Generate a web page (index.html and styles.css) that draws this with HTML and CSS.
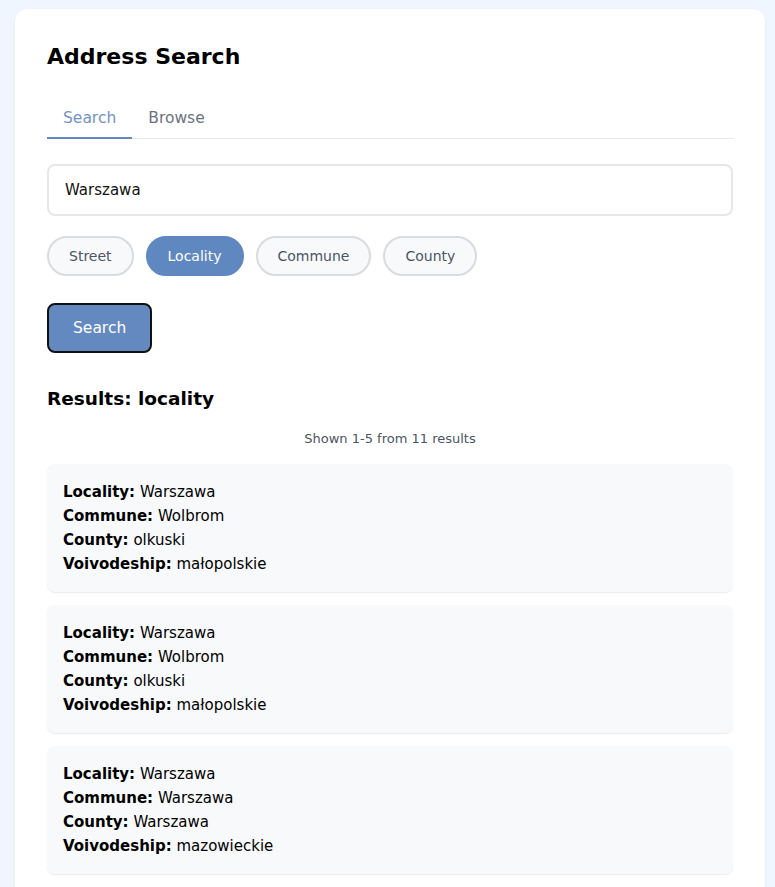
FILE: index.html
```html
<!DOCTYPE html>
<html lang="en">
<head>
<meta charset="utf-8">
<title>Address Search</title>
<link rel="stylesheet" href="styles.css">
</head>
<body>
<main class="card">
  <h1 class="title">Address Search</h1>
  <nav class="tabs">
    <button class="tab tab-active">Search</button>
    <button class="tab">Browse</button>
  </nav>
  <input class="search-input" type="text" value="Warszawa">
  <div class="chips">
    <button class="chip">Street</button>
    <button class="chip chip-active">Locality</button>
    <button class="chip">Commune</button>
    <button class="chip">County</button>
  </div>
  <button class="search-btn">Search</button>
  <h2 class="results-title">Results: locality</h2>
  <p class="results-count">Shown 1-5 from 11 results</p>
  <div class="results">
    <div class="result">
      <div><b>Locality:</b> Warszawa</div>
      <div><b>Commune:</b> Wolbrom</div>
      <div><b>County:</b> olkuski</div>
      <div><b>Voivodeship:</b> małopolskie</div>
    </div>
    <div class="result">
      <div><b>Locality:</b> Warszawa</div>
      <div><b>Commune:</b> Wolbrom</div>
      <div><b>County:</b> olkuski</div>
      <div><b>Voivodeship:</b> małopolskie</div>
    </div>
    <div class="result">
      <div><b>Locality:</b> Warszawa</div>
      <div><b>Commune:</b> Warszawa</div>
      <div><b>County:</b> Warszawa</div>
      <div><b>Voivodeship:</b> mazowieckie</div>
    </div>
  </div>
</main>
</body>
</html>
```
FILE: styles.css
```css
* { box-sizing: border-box; }
html, body { margin: 0; padding: 0; }
body {
  background: #eff6ff;
  font-family: "DejaVu Sans", "Open Sans", sans-serif;
  color: #000;
  padding: 9px 10px 0 15px;
  overflow: hidden;
  height: 887px;
}
.card {
  background: #fff;
  border-radius: 12px;
  padding: 32px;
  width: 750px;
  min-height: 900px;
  box-shadow: 0 1px 3px rgba(0,0,0,0.06);
}
.title {
  margin: 0 0 25px;
  font-size: 22px;
  line-height: 32px;
  font-weight: bold;
}
.tabs {
  display: flex;
  border-bottom: 1px solid #e5e7eb;
  margin-bottom: 25px;
}
.tab {
  font-family: inherit;
  background: none;
  border: none;
  border-bottom: 2px solid transparent;
  margin-bottom: -1px;
  padding: 8px 16px 7px;
  font-size: 15.5px;
  line-height: 24px;
  color: #6b7280;
}
.tab-active {
  color: #7392c6;
  border-bottom-color: #6389c0;
}
.search-input {
  display: block;
  width: 100%;
  height: 52px;
  border: 2px solid #e5e7eb;
  border-radius: 8px;
  padding: 0 16px;
  font-family: inherit;
  font-size: 15px;
  color: #111;
  margin-bottom: 20px;
  outline: none;
}
.chips {
  display: flex;
  gap: 12px;
  margin-bottom: 27px;
}
.chip {
  font-family: inherit;
  height: 40px;
  padding: 0 20px;
  border-radius: 20px;
  border: 2px solid #d8dbe0;
  background: #f8f9fb;
  color: #4b5563;
  font-size: 14px;
}
.chip-wide { padding: 0 22px; }
.chip-active {
  background: #5f88c0;
  border-color: #5f88c0;
  color: #fff;
}
.search-btn {
  display: block;
  font-family: inherit;
  height: 50px;
  padding: 0 24px;
  background: #6389c0;
  color: #fff;
  border: 2px solid #111;
  border-radius: 8px;
  font-size: 15.5px;
  margin-bottom: 31px;
}
.results-title {
  margin: 0 0 15px;
  font-size: 18.5px;
  line-height: 30px;
  font-weight: bold;
}
.results-count {
  margin: 0 0 15px;
  text-align: center;
  font-size: 13px;
  line-height: 20px;
  color: #4b5563;
}
.results {
  display: flex;
  flex-direction: column;
  gap: 13px;
}
.result {
  background: #f8f9fb;
  border-radius: 8px;
  padding: 16px;
  font-size: 15px;
  line-height: 24px;
  box-shadow: 0 1px 1px rgba(0,0,0,0.08);
}
.result b { font-weight: bold; }
```
